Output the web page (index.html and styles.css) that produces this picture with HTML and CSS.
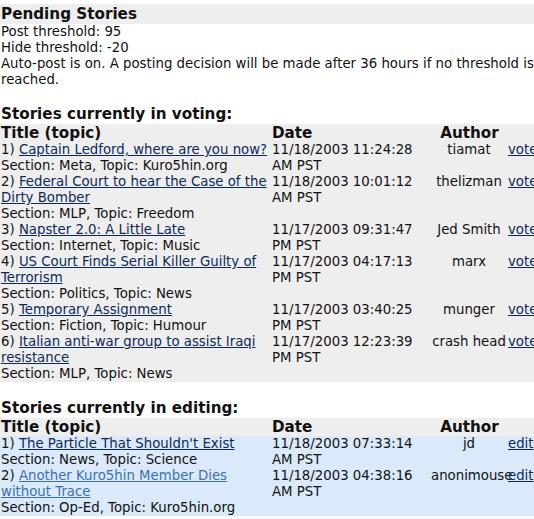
FILE: index.html
```html
<!DOCTYPE html>
<html>
<head>
<meta charset="utf-8">
<title>Pending Stories</title>
<link rel="stylesheet" href="styles.css">
</head>
<body>
<div class="page">
  <div class="band">Pending Stories</div>
  <div class="info">
    <div>Post threshold: 95</div>
    <div>Hide threshold: -20</div>
    <div>Auto-post is on. A posting decision will be made after 36 hours if no threshold is reached.</div>
  </div>

  <div class="heading">Stories currently in voting:</div>
  <table class="stories voting">
    <colgroup><col class="c-title"><col class="c-date"><col class="c-author"><col class="c-act"></colgroup>
    <tr class="head"><th class="left">Title (topic)</th><th class="left">Date</th><th>Author</th><th></th></tr>
    <tr><td>1) <a href="#">Captain Ledford, where are you now?</a><br>Section: Meta, Topic: Kuro5hin.org</td><td>11/18/2003 11:24:28 AM PST</td><td class="author">tiamat</td><td><a href="#">vote</a></td></tr>
    <tr><td>2) <a href="#">Federal Court to hear the Case of the Dirty Bomber</a><br>Section: MLP, Topic: Freedom</td><td>11/18/2003 10:01:12 AM PST</td><td class="author">thelizman</td><td><a href="#">vote</a></td></tr>
    <tr><td>3) <a href="#">Napster 2.0: A Little Late</a><br>Section: Internet, Topic: Music</td><td>11/17/2003 09:31:47 PM PST</td><td class="author">Jed Smith</td><td><a href="#">vote</a></td></tr>
    <tr><td>4) <a href="#">US Court Finds Serial Killer Guilty of Terrorism</a><br>Section: Politics, Topic: News</td><td>11/17/2003 04:17:13 PM PST</td><td class="author">marx</td><td><a href="#">vote</a></td></tr>
    <tr><td>5) <a href="#">Temporary Assignment</a><br>Section: Fiction, Topic: Humour</td><td>11/17/2003 03:40:25 PM PST</td><td class="author">munger</td><td><a href="#">vote</a></td></tr>
    <tr><td>6) <a href="#">Italian anti-war group to assist Iraqi resistance</a><br>Section: MLP, Topic: News</td><td>11/17/2003 12:23:39 PM PST</td><td class="author">crash head</td><td><a href="#">vote</a></td></tr>
  </table>

  <div class="gap"></div>
  <div class="heading">Stories currently in editing:</div>
  <table class="stories editing">
    <colgroup><col class="c-title"><col class="c-date"><col class="c-author"><col class="c-act"></colgroup>
    <tr class="head"><th class="left">Title (topic)</th><th class="left">Date</th><th>Author</th><th></th></tr>
    <tr><td>1) <a href="#">The Particle That Shouldn't Exist</a><br>Section: News, Topic: Science</td><td>11/18/2003 07:33:14 AM PST</td><td class="author">jd</td><td><a href="#">edit</a></td></tr>
    <tr><td>2) <a href="#" class="visited">Another Kuro5hin Member Dies without Trace</a><br>Section: Op-Ed, Topic: Kuro5hin.org</td><td>11/18/2003 04:38:16 AM PST</td><td class="author">anonimouse</td><td><a href="#">edit</a></td></tr>
  </table>
</div>
</body>
</html>
```

FILE: styles.css
```css
html, body {
  margin: 0;
  padding: 0;
  overflow: hidden;
  background: #ffffff;
}
body {
  font-family: "DejaVu Sans", Verdana, sans-serif;
  font-size: 13.3px;
  line-height: 16px;
  color: #111111;
}
.page {
  width: 540px;
  padding-top: 4px;
}
.band {
  background: #eeeeee;
  font-weight: bold;
  font-size: 15.2px;
  line-height: 20px;
  padding-left: 1px;
}
.info {
  padding-left: 1px;
  margin-bottom: 16px;
}
.heading {
  font-weight: bold;
  font-size: 15.2px;
  line-height: 20px;
  padding-left: 1px;
}
.gap {
  height: 16px;
}
.stories {
  width: 540px;
  table-layout: fixed;
  border-collapse: collapse;
  border-spacing: 0;
}
.c-title { width: 271px; }
.c-date { width: 160px; }
.c-author { width: 76px; }
.c-act { width: 33px; }
.stories th, .stories td {
  padding: 0 0 0 1px;
  vertical-align: top;
  text-align: left;
}
.stories th {
  font-size: 15.2px;
  line-height: 18px;
  font-weight: bold;
  text-align: center;
}
.stories th.left { text-align: left; }
.stories td.author { text-align: center; white-space: nowrap; padding: 0; }
.voting { background: #eeeeee; }
.editing tr { background: #daeafa; }
.editing tr.head { background: #eeeeee; }
a { color: #0b2a5c; text-decoration: underline; }
a.visited { color: #3a72b0; }
```
